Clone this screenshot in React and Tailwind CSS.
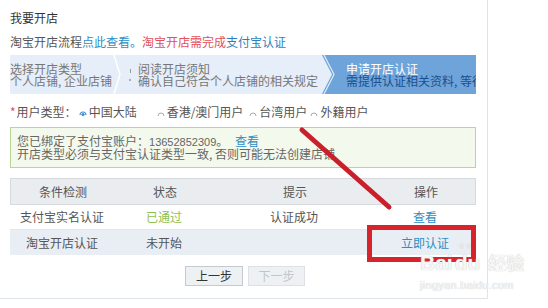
import React from "react";

const font = { fontFamily: '"Noto Sans CJK SC", "Noto Sans", sans-serif' };

const Radio = ({ checked }) => (
  <svg width="8" height="8" viewBox="0 0 8 8" className="mx-[2px] mt-[3px] shrink-0">
    {checked ? (
      <>
        <path d="M1 6 A3 3 0 0 1 7 6" fill="none" stroke="#3a8fd0" strokeWidth="1.2" />
        <circle cx="4" cy="5.5" r="1.6" fill="#3a8fd0" />
      </>
    ) : (
      <path d="M1 7 A3 3 0 0 1 7 7" fill="none" stroke="#aaa" strokeWidth="1" />
    )}
  </svg>
);

const App = () => {
  return (
    <div className="relative w-[548px] h-[308px] bg-white overflow-hidden text-[12px] text-[#555]" style={font}>
      {/* Panel */}
      <div className="w-[488px] h-[299px] border-r border-b border-[#dfe4ea] pl-[10px] pr-[11px] flex flex-col">
        <div className="h-[36px] pt-[10px] leading-[16px] text-[#333]">我要开店</div>

        <div className="h-[19px] leading-[12px] text-[#555]">
          淘宝开店流程<span className="text-[#2d8ec4]">点此查看。</span>
          <span className="text-[#e0505c]">淘宝开店需完成</span>
          <span className="text-[#2d7fb8]">支付宝认证</span>
        </div>

        {/* Step bar */}
        <div className="flex h-[39px] w-[466px] overflow-hidden bg-[#e5eef9] leading-[12px]">
          <div className="w-[103px] shrink-0 flex flex-col justify-center text-[#777]">
            <span>选择开店类型</span>
            <span className="whitespace-nowrap">个人店铺, 企业店铺</span>
          </div>
          <svg width="8" height="39" viewBox="0 0 8 39" className="shrink-0">
            <polyline points="1,0 7,19.5 1,39" fill="none" stroke="#ffffff" strokeWidth="1.5" />
          </svg>
          <div className="w-[201px] shrink-0 flex items-center pl-[6px] text-[#777]">
            <div className="flex flex-col items-center w-[6px] mr-[5px] gap-[6px]">
              <span className="w-[1px] h-[4px] bg-[#999]"></span>
              <span className="w-[2px] h-[2px] rounded-full bg-[#999]"></span>
            </div>
            <div className="flex flex-col whitespace-nowrap">
              <span>阅读开店须知</span>
              <span>确认自己符合个人店铺的相关规定</span>
            </div>
          </div>
          <div className="flex-1 flex bg-[#6ea4d9] overflow-hidden">
            <svg width="14" height="39" viewBox="0 0 14 39" className="shrink-0">
              <polygon points="0,0 10,19.5 0,39" fill="#e5eef9" />
              <polyline points="2,0 12,19.5 2,39" fill="none" stroke="#ffffff" strokeWidth="1.2" opacity="0.8" />
            </svg>
            <div className="flex flex-col justify-center pl-[10px] whitespace-nowrap">
              <span className="text-white">申请开店认证</span>
              <span className="text-[#1c4f8e]">需提供认证相关资料, 等待审核</span>
            </div>
          </div>
        </div>

        {/* User type */}
        <div className="flex items-center h-[33px] pt-[2px] whitespace-nowrap text-[#555]">
          <span className="text-[#e0505c] mr-[1px]">*</span>
          <span>用户类型：</span>
          <Radio checked />
          <span className="mr-[18px]">中国大陆</span>
          <Radio />
          <span className="mr-[4px]">香港/澳门用户</span>
          <Radio />
          <span className="mr-[1px]">台湾用户</span>
          <Radio />
          <span>外籍用户</span>
        </div>

        {/* Notice */}
        <div className="h-[41px] border border-[#b9d695] bg-[#f3f9ec] pl-[6px] flex flex-col justify-center leading-[12px] text-[#666]">
          <div className="whitespace-nowrap">
            您已绑定了支付宝账户：
            <span className="text-[11px]" style={{ fontFamily: '"Liberation Sans", sans-serif' }}>13652852309</span>
            。 <span className="text-[#2d8ec4] ml-[4px]">查看</span>
          </div>
          <div>开店类型必须与支付宝认证类型一致, 否则可能无法创建店铺</div>
        </div>

        {/* Table */}
        <div className="mt-[10px] w-[466px] text-[#555]">
          <div className="grid grid-cols-[104px_100px_160px_102px] h-[27px] items-center bg-[#eaedf0] border border-[#d6dadf] text-center">
            <span>条件检测</span>
            <span>状态</span>
            <span>提示</span>
            <span>操作</span>
          </div>
          <div className="grid grid-cols-[104px_100px_160px_102px] h-[25px] items-center text-center bg-white border-b border-[#e3e7ec]">
            <span>支付宝实名认证</span>
            <span className="text-[#8cc152]">已通过</span>
            <span>认证成功</span>
            <span className="text-[#2d8ec4]">查看</span>
          </div>
          <div className="grid grid-cols-[104px_100px_160px_102px] h-[25px] items-center text-center bg-[#e9eef4]">
            <span>淘宝开店认证</span>
            <span>未开始</span>
            <span></span>
            <span className="text-[#2d8ec4]">立即认证</span>
          </div>
        </div>

        {/* Buttons */}
        <div className="flex justify-center gap-[5px] mt-[11px] pl-[4px]">
          <button className="w-[58px] h-[20px] border border-[#c5cad0] bg-[#eef1f4] text-[#333] text-[12px] leading-[18px]">
            上一步
          </button>
          <button className="w-[57px] h-[20px] border border-[#dde1e5] bg-[#eef1f4] text-[#c2c6cb] text-[12px] leading-[18px]">
            下一步
          </button>
        </div>
      </div>

      {/* Red annotations */}
      <svg className="absolute left-0 top-0 pointer-events-none" width="548" height="308">
        <line x1="302" y1="130" x2="389" y2="207" stroke="#c9202b" strokeWidth="5" strokeLinecap="round" />
        <rect x="369.5" y="227.5" width="104" height="32" fill="none" stroke="#d7232c" strokeWidth="5" />
      </svg>

      {/* Watermark */}
      <div
        className="absolute left-[420px] top-[252px] pointer-events-none text-[#f6f6f6] [text-shadow:0_0_1px_#b8b8b8]"
        style={{ fontFamily: '"Liberation Sans", "Noto Sans CJK SC", sans-serif' }}
      >
        <div className="flex items-end leading-none">
          <span className="text-[21px] font-bold">Bai</span>
          <span className="relative text-[21px] font-bold ml-[2px]">
            du
            <span className="absolute left-[4px] -top-[9px] flex gap-[2px]">
              <span className="w-[5px] h-[6px] rounded-full bg-[#e6e6e6]"></span>
              <span className="w-[5px] h-[6px] rounded-full bg-[#e6e6e6]"></span>
            </span>
          </span>
          <span className="text-[18px] font-bold ml-[8px]">经验</span>
        </div>
        <div className="text-[11px] mt-[4px] tracking-[0.3px]">jingyan.baidu.com</div>
      </div>
    </div>
  );
};

export default App;
